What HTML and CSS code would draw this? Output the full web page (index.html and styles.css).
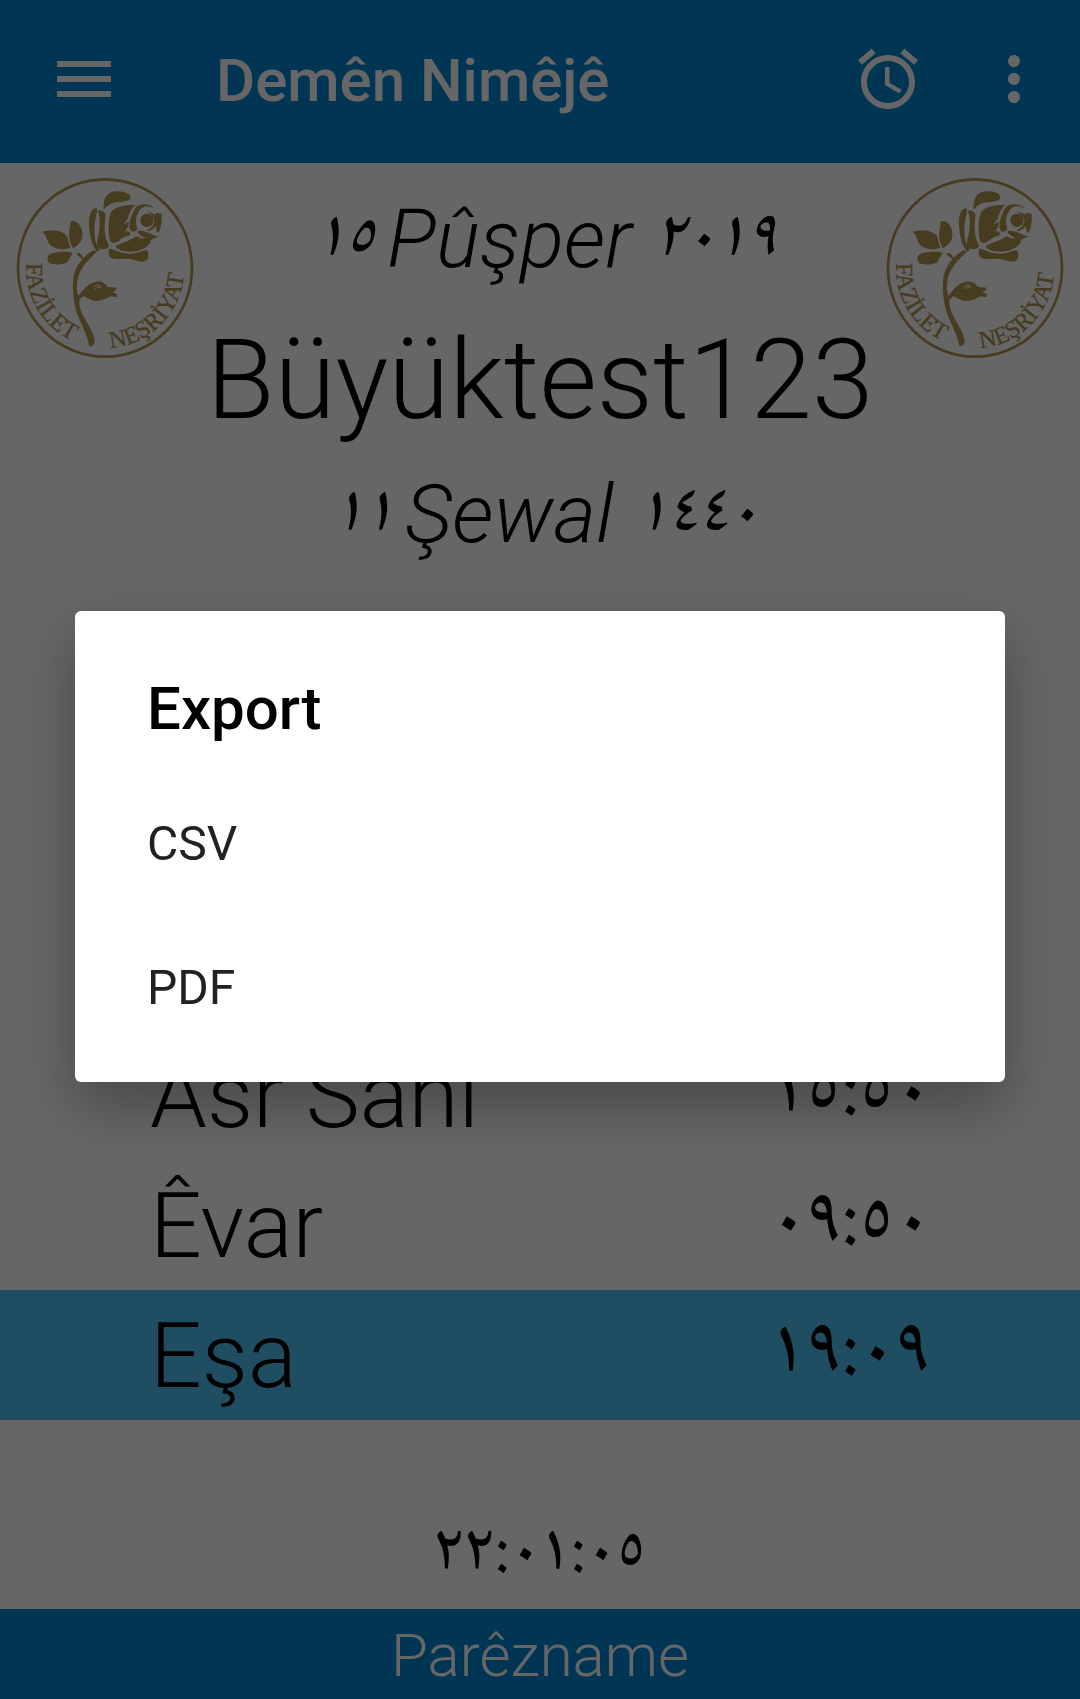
FILE: index.html
```html
<!DOCTYPE html>
<html lang="ku">
<head>
<meta charset="utf-8">
<meta name="viewport" content="width=device-width, initial-scale=1">
<title>Demên Nimêjê</title>
<link rel="stylesheet" href="styles.css">
</head>
<body>
<svg class="defs" aria-hidden="true">
  <symbol id="logo" viewBox="48 52 534 546">
    <path id="arc-left" fill="none" d="M79 310A236 240 0 0 0 315 565"/>
    <path id="arc-right" fill="none" d="M315 565A236 240 0 0 0 551 300"/>
    <ellipse cx="315" cy="325" rx="261" ry="266" fill="none" stroke="currentColor" stroke-width="8"/>
    <g fill="currentColor">
      <path d="M311 151C308 112 325 94 352 95C376 95 392 104 391 114C389 126 366 126 347 128C330 131 321 139 311 151Z"/>
      <path d="M290 146C274 144 265 166 267 195C269 230 276 260 292 276L299 271C286 254 283 232 283 205C284 178 294 158 290 146Z"/>
      <path d="M293 153C304 150 316 157 317 167C312 200 312 230 327 258C325 270 305 271 293 265C285 250 299 226 299 200C300 180 299 166 293 153Z"/>
      <path d="M407 136C375 134 345 141 334 156C323 175 324 235 333 247C341 255 358 245 365 236C376 229 385 231 392 222C384 213 378 214 374 217C383 207 387 197 386 185C382 190 378 192 371 192C389 182 384 150 407 136Z"/>
      <path d="M464 147C450 130 417 130 406 145C393 166 382 200 392 213C400 220 408 214 412 207C404 186 408 160 425 145C438 136 451 140 464 147Z"/>
      <circle cx="441" cy="182" r="20"/>
      <path d="M438 153C448 156 459 162 466 165L470 159L485 162C487 185 483 205 476 220C469 215 466 207 468 198C461 207 450 215 438 214C448 209 462 199 463 185C464 171 453 163 438 153Z"/>
      <path d="M412 214C435 210 453 225 475 231C462 236 451 238 452 247C445 263 418 276 390 276C366 276 348 268 347 259C367 247 391 245 409 229C416 235 425 237 438 236C425 230 414 224 412 214Z"/>
      <path d="M328 267C350 270 359 282 391 282C414 282 425 272 441 272C449 284 446 301 434 305C416 309 404 297 382 297C358 297 335 302 328 288C325 280 326 273 328 267Z"/>
      <path d="M127 216C155 209 190 211 201 230L211 264C190 272 163 269 151 256C140 244 141 227 127 216Z"/>
      <path d="M213 184C235 181 250 205 247 231C244 249 231 257 220 266C209 255 204 224 210 201Z"/>
      <path d="M218 279C199 274 162 276 149 284C140 291 141 302 148 311C164 317 193 315 203 306Z"/>
      <path d="M230 282L237 279C245 284 249 291 252 301C243 296 234 290 230 282Z"/>
      <path d="M282 271L290 277C258 306 238 330 233 360C229 380 231 401 236 409C251 386 266 371 288 366C302 364 317 369 322 381L350 384C348 391 343 397 336 399L351 402L349 413L331 410C315 418 300 426 282 423C264 420 256 409 249 410L238 420C236 448 249 469 264 494C275 514 287 537 283 551C279 561 271 562 267 557C263 526 240 488 229 455C218 415 217 381 220 355C226 319 247 291 282 271Z"/>
    </g>
    <path d="M281 381Q291 372 303 382Q292 382 284 387" fill="none" stroke="#fff" stroke-width="3"/>
    <g class="logo-text">
      <text><textPath href="#arc-left">FAZİLET</textPath></text>
      <text><textPath href="#arc-right" startOffset="16">NEŞRİYAT</textPath></text>
    </g>
  </symbol>
</svg>

<div class="screen">
  <header class="bar">
    <button class="icon-button" type="button" aria-label="Menu">
      <svg viewBox="0 0 24 24"><path d="M3 18h18v-2H3v2zm0-5h18v-2H3v2zm0-7v2h18V6H3z"/></svg>
    </button>
    <h1 class="bar-title">Demên Nimêjê</h1>
    <button class="icon-button" type="button" aria-label="Alarm">
      <svg viewBox="0 0 24 24"><path d="M22 5.72l-4.6-3.86-1.29 1.53 4.6 3.86L22 5.72zM7.88 3.39L6.6 1.86 2 5.71l1.29 1.53 4.59-3.85zM12.5 8H11v6l4.75 2.85.75-1.23-4-2.37V8zM12 4c-4.97 0-9 4.03-9 9s4.02 9 9 9c4.97 0 9-4.03 9-9s-4.03-9-9-9zm0 16c-3.87 0-7-3.13-7-7s3.13-7 7-7 7 3.13 7 7-3.13 7-7 7z"/></svg>
    </button>
    <button class="icon-button" type="button" aria-label="More">
      <svg viewBox="0 0 24 24"><path d="M12 8c1.1 0 2-.9 2-2s-.9-2-2-2-2 .9-2 2 .9 2 2 2zm0 2c-1.1 0-2 .9-2 2s.9 2 2 2 2-.9 2-2-.9-2-2-2zm0 6c-1.1 0-2 .9-2 2s.9 2 2 2 2-.9 2-2-.9-2-2-2z"/></svg>
    </button>
  </header>

  <main class="content">
    <section class="top">
      <svg class="logo"><use href="#logo"/></svg>
      <div class="place">
        <p class="date"><span class="digits day">١٥</span>Pûşper<span class="digits year">٢٠١٩</span></p>
        <h2 class="city">Büyüktest123</h2>
        <p class="date"><span class="digits day">١١</span>Şewal<span class="digits year">١٤٤٠</span></p>
      </div>
      <svg class="logo"><use href="#logo"/></svg>
    </section>

    <table class="times">
      <tr><th scope="row">Asr Sani</th><td>١٥:٥٠</td></tr>
      <tr><th scope="row">Êvar</th><td>٠٩:٥٠</td></tr>
      <tr class="current"><th scope="row">Eşa</th><td>١٩:٠٩</td></tr>
    </table>

    <p class="countdown">٢٢:٠١:٠٥</p>
  </main>

  <button class="footer" type="button">Parêzname</button>
</div>

<div class="scrim">
  <div class="dialog" role="dialog" aria-modal="true" aria-labelledby="dialog-title">
    <h2 class="dialog-title" id="dialog-title">Export</h2>
    <button class="option" type="button">CSV</button>
    <button class="option" type="button">PDF</button>
  </div>
</div>
</body>
</html>
```
FILE: styles.css
```css
* {
  box-sizing: border-box;
}

body {
  margin: 0;
  background: #fff;
  color: #000;
  font-family: Roboto, sans-serif;
}

h1,
h2,
p {
  margin: 0;
}

button {
  border: 0;
  padding: 0;
  background: none;
  color: inherit;
  font: inherit;
}

.defs {
  position: absolute;
  width: 0;
  height: 0;
}

.screen {
  display: flex;
  flex-direction: column;
  min-height: 100vh;
}

.bar {
  display: flex;
  align-items: center;
  gap: 54px;
  padding: 40px 30px 45px 48px;
  background: #0288d1;
  color: #fff;
}

.icon-button svg {
  display: block;
  width: 72px;
  height: 72px;
  fill: currentColor;
}

.bar-title {
  flex: 1;
  padding: 4px 0 0 42px;
  font-size: 60px;
  font-weight: 500;
  line-height: 74px;
}

.content {
  display: flex;
  flex: 1;
  flex-direction: column;
}

.top {
  display: flex;
  justify-content: space-between;
  padding: 14px 16px;
}

.logo {
  width: 178px;
  height: 182px;
  color: #b29350;
}

.logo-text {
  fill: currentColor;
  stroke: currentColor;
  stroke-width: 1px;
  font-family: "Liberation Serif", serif;
  font-size: 72px;
}

.place {
  flex: 1;
  padding-top: 8px;
  font-weight: 300;
  text-align: center;
  white-space: nowrap;
}

.date {
  padding-left: 10px;
  font-size: 82px;
  font-style: italic;
  line-height: 108px;
}

.digits,
.times td,
.countdown {
  font-family: "Noto Naskh Arabic", "DejaVu Sans", sans-serif;
  font-weight: 500;
}

.digits {
  font-size: 66px;
  line-height: 72px;
  vertical-align: 12px;
}

.day {
  margin-right: 12px;
}

.year {
  margin-left: 22px;
}

.city {
  padding-top: 7px;
  font-size: 111px;
  font-weight: 300;
  line-height: 160px;
}

.times {
  width: 100%;
  margin-top: auto;
  border-collapse: collapse;
  font-size: 91px;
  line-height: 128px;
}

.times th {
  padding: 2px 0 0 150px;
  font-weight: 300;
  text-align: left;
}

.times td {
  padding: 0 150px 0 0;
  font-size: 77px;
  line-height: 130px;
  text-align: right;
}

.current {
  background: #4fc3f7;
}

.countdown {
  padding: 90px 0 9px;
  font-size: 66px;
  line-height: 90px;
  text-align: center;
}

.footer {
  padding-top: 4px;
  background: #0288d1;
  color: #fff;
  font-size: 60px;
  font-weight: 300;
  line-height: 86px;
}

.scrim {
  position: fixed;
  inset: 0;
  display: flex;
  align-items: center;
  justify-content: center;
  padding: 0 75px 6px;
  background: rgba(0, 0, 0, 0.6);
}

.dialog {
  display: flex;
  flex: 1;
  flex-direction: column;
  padding: 53px 0 22px;
  border-radius: 6px;
  background: #fff;
  box-shadow: 0 24px 60px rgba(0, 0, 0, 0.3);
}

.dialog-title {
  padding: 0 72px 18px;
  font-size: 60px;
  font-weight: 500;
  line-height: 90px;
}

.option {
  padding: 0 72px;
  color: #212121;
  font-size: 48px;
  line-height: 144px;
  text-align: left;
}
```
